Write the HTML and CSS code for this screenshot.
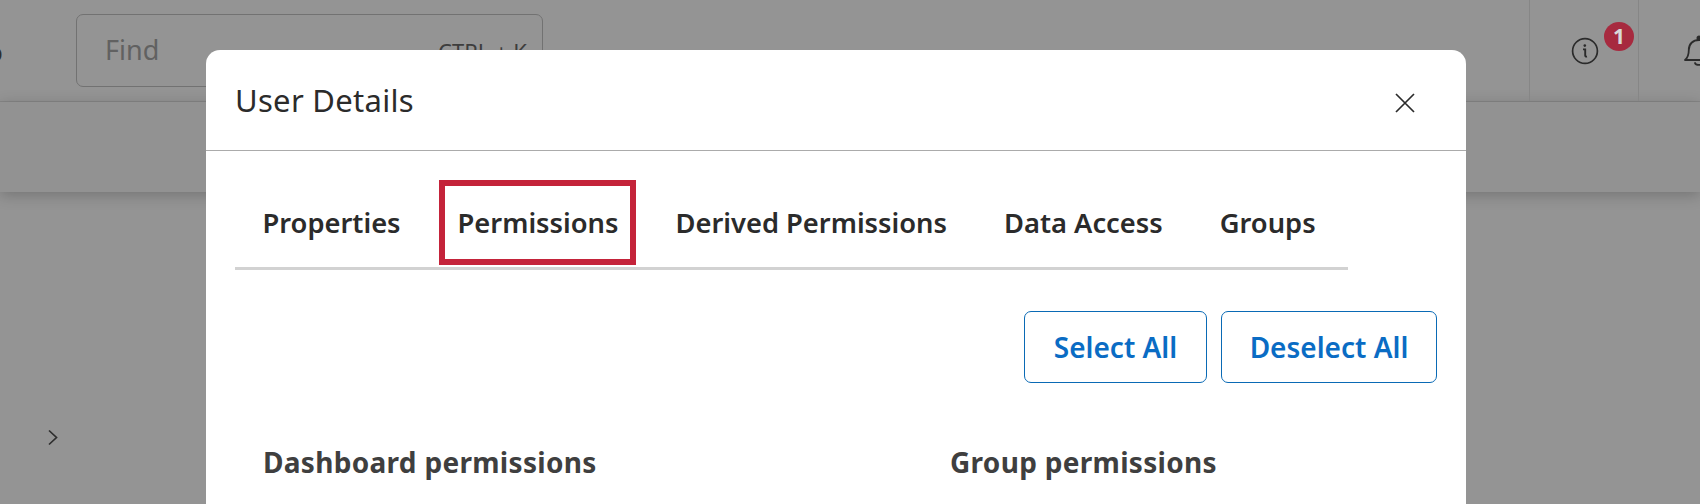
FILE: index.html
```html
<!DOCTYPE html>
<html lang="en">
<head>
<meta charset="utf-8">
<title>User Details</title>
<link rel="stylesheet" href="styles.css">
</head>
<body>
<div class="page">
  <header class="topbar">
    <div class="crumb"><span class="crumb-text">o</span></div>
    <div class="search">
      <span class="search-label">Find</span>
      <span class="search-key">CTRL + K</span>
    </div>
    <div class="spacer"></div>
    <div class="tool tool-info">
      <svg class="info-icon" width="28" height="28" viewBox="0 0 28 28" fill="none" stroke="#2b2b2b">
        <circle cx="14" cy="14" r="12.4" stroke-width="1.7"/>
        <path d="M12 12.4h2.2v6.2c0 .9.5 1.2 1.8.9" stroke-width="1.9" fill="none"/>
        <circle cx="13.8" cy="8.6" r="1.3" fill="#2b2b2b" stroke="none"/>
      </svg>
      <span class="badge">1</span>
    </div>
    <div class="tool tool-bell">
      <svg width="32" height="34" viewBox="0 0 32 34" fill="none" stroke="#2b2b2b" stroke-width="1.8" stroke-linejoin="round">
        <path d="M2 26c3-2.500 3.800-5 3.800-10 0-6 4-10 10.200-10s10.200 4 10.200 10c0 5 .8 7.500 3.800 10z"/>
        <path d="M12 29c.8 2.600 7.200 2.600 8 0" stroke-linecap="round"/>
        <circle cx="16" cy="4" r="1.600" fill="#2b2b2b"/>
      </svg>
    </div>
  </header>
  <div class="subbar"></div>
  <div class="side">
    <svg width="12" height="17" viewBox="0 0 12 17" fill="none" stroke="#2e2e2e" stroke-width="1.7"><path d="M2 1.500l7.500 7-7.500 7"/></svg>
  </div>

  <section class="modal">
    <div class="modal-head">
      <h1 class="modal-title">User Details</h1>
      <svg class="close" width="20" height="20" viewBox="0 0 20 20" fill="none" stroke="#2b2b2b" stroke-width="1.7"><path d="M1 1l18 18M19 1L1 19"/></svg>
    </div>
    <div class="modal-body">
      <nav class="tabs">
        <a class="tab">Properties</a>
        <a class="tab tab-marked">Permissions</a>
        <a class="tab">Derived Permissions</a>
        <a class="tab">Data Access</a>
        <a class="tab">Groups</a>
      </nav>
      <div class="actions">
        <button class="btn btn-select">Select All</button>
        <button class="btn btn-deselect">Deselect All</button>
      </div>
      <div class="columns">
        <h2 class="col-title col-left">Dashboard permissions</h2>
        <h2 class="col-title">Group permissions</h2>
      </div>
    </div>
  </section>
</div>
</body>
</html>
```
FILE: styles.css
```css
*, *::before, *::after { box-sizing: border-box; }
html, body { margin: 0; padding: 0; }
body {
  font-family: "Noto Sans", "Liberation Sans", sans-serif;
  background: #949494;
  overflow: hidden;
}
.page {
  position: relative;
  width: 1700px;
  height: 504px;
  overflow: hidden;
  background: #949494;
}
.topbar {
  display: flex;
  align-items: stretch;
  height: 102px;
  border-bottom: 1px solid #868686;
  background: #949494;
}
.crumb {
  width: 76px;
  display: flex;
  align-items: center;
  overflow: hidden;
}
.crumb-text {
  font-size: 28px;
  color: #2e2e2e;
  margin-left: -14px;
}
.search {
  width: 467px;
  height: 73px;
  margin-top: 14px;
  padding: 0 15px 0 28px;
  border: 1px solid #727272;
  border-radius: 7px;
  display: flex;
  align-items: center;
  justify-content: space-between;
}
.search-label { font-size: 27px; color: #616161; margin-top: -2px; }
.search-key { font-size: 22px; color: #3d3d3d; margin-top: 1px; }
.spacer { flex: 1; }
.tool {
  position: relative;
  display: flex;
  align-items: center;
  border-left: 1px solid #868686;
}
.tool-info { width: 109px; padding-left: 41px; }
.tool-bell { width: 62px; padding-left: 44px; overflow: hidden; }
.info-icon { flex: none; margin-top: 1px; }
.badge {
  position: absolute;
  left: 74px;
  top: 22px;
  width: 30px;
  height: 29px;
  border-radius: 50%;
  background: #a72a3f;
  color: #d9d9d9;
  font-size: 21px;
  font-weight: 700;
  line-height: 28px;
  text-align: center;
}
.tool-bell svg { flex: none; margin-top: 1px; }
.subbar {
  height: 90px;
  background: #929292;
  box-shadow: 0 3px 14px rgba(0, 0, 0, .22);
}
.side {
  position: absolute;
  left: 47px;
  top: 429px;
  line-height: 0;
}
.modal {
  position: absolute;
  left: 206px;
  top: 50px;
  width: 1260px;
  height: 470px;
  background: #fff;
  border-radius: 14px 14px 0 0;
}
.modal-head {
  height: 101px;
  padding: 0 51px 0 29px;
  border-bottom: 1px solid #ababab;
  display: flex;
  align-items: center;
  justify-content: space-between;
}
.modal-title {
  margin: 0;
  font-size: 31px;
  font-weight: 400;
  letter-spacing: .3px;
  color: #2b2b2b;
}
.close { margin-top: 5px; }
.modal-body {
  padding: 29px 29px 0;
}
.tabs {
  display: flex;
  width: 1113px;
  height: 90px;
  border-bottom: 3px solid #d2d2d2;
  padding-left: 27.5px;
  gap: 57px;
}
.tab {
  position: relative;
  font-size: 27.3px;
  font-weight: 600;
  color: #2b2b2b;
  line-height: 36px;
  padding-top: 25px;
}
.tab-marked::before {
  content: "";
  position: absolute;
  left: -19px;
  right: -18px;
  top: 0;
  height: 85px;
  border: 6px solid #c4233a;
}
.actions {
  display: flex;
  justify-content: flex-end;
  gap: 14px;
  margin-top: 41px;
}
.btn {
  height: 72px;
  border: 1px solid #0a6ab5;
  border-radius: 7px;
  background: #fff;
  color: #0a6cc4;
  font: 600 28px "Noto Sans", "Liberation Sans", sans-serif;
  padding: 0 0 1px;
}
.btn-select { width: 183px; }
.btn-deselect { width: 216px; }
.columns {
  display: flex;
  padding: 61px 0 0 28px;
}
.col-title {
  margin: 0;
  font-size: 28px;
  font-weight: 700;
  letter-spacing: .3px;
  color: #3f3f3f;
  line-height: 36px;
}
.col-left { width: 687px; }
```
